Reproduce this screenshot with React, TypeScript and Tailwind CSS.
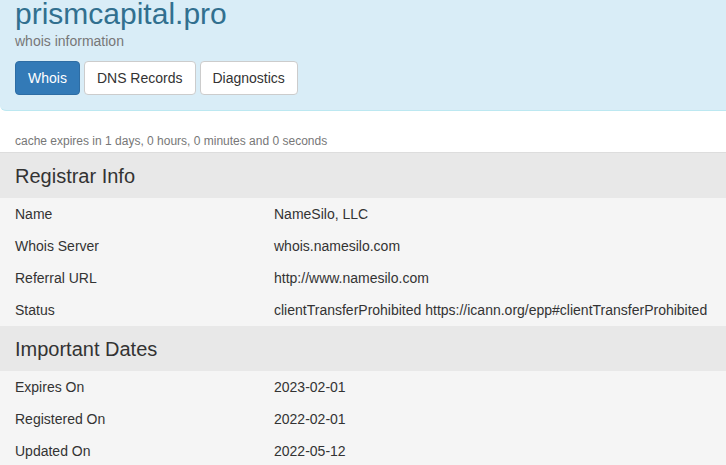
import React from "react";

const registrar = [
  ["Name", "NameSilo, LLC"],
  ["Whois Server", "whois.namesilo.com"],
  ["Referral URL", "http://www.namesilo.com"],
  ["Status", "clientTransferProhibited https://icann.org/epp#clientTransferProhibited"],
];

const dates = [
  ["Expires On", "2023-02-01"],
  ["Registered On", "2022-02-01"],
  ["Updated On", "2022-05-12"],
];

const Section = ({ title, rows }: { title: string; rows: string[][] }) => (
  <div>
    <div className="bg-[#e8e8e8] h-[45px] flex items-center px-[15px] text-[20px] text-[#333]">
      {title}
    </div>
    {rows.map(([k, v]) => (
      <div key={k} className="bg-[#f5f5f5] h-[32px] flex items-center text-[14px] text-[#333]">
        <div className="w-[274px] pl-[15px] shrink-0">{k}</div>
        <div className="whitespace-nowrap">{v}</div>
      </div>
    ))}
  </div>
);

export default function App() {
  return (
    <div className="w-[726px] h-[465px] overflow-hidden bg-white font-['Liberation_Sans',Arial,sans-serif]">
      <div className="bg-[#d9edf7] border-b border-[#bce8f1] rounded-bl-md h-[111px] px-[15px]">
        <h1 className="text-[30px] leading-[28px] text-[#31708f]">prismcapital.pro</h1>
        <p className="mt-[3px] text-[14px] leading-[20px] text-[#777]">whois information</p>
        <div className="mt-[10px] flex gap-[4px]">
          <button className="h-[34px] px-[12px] text-[14px] rounded-[4px] bg-[#337ab7] border border-[#2e6da4] text-white">
            Whois
          </button>
          <button className="h-[34px] px-[12px] text-[14px] rounded-[4px] bg-white border border-[#ccc] text-[#333]">
            DNS Records
          </button>
          <button className="h-[34px] px-[12px] text-[14px] rounded-[4px] bg-white border border-[#ccc] text-[#333]">
            Diagnostics
          </button>
        </div>
      </div>
      <div className="h-[42px] flex items-end pb-[2px] px-[15px] text-[12px] text-[#777] border-b border-[#ddd]">
        cache expires in 1 days, 0 hours, 0 minutes and 0 seconds
      </div>
      <Section title="Registrar Info" rows={registrar} />
      <Section title="Important Dates" rows={dates} />
    </div>
  );
}
